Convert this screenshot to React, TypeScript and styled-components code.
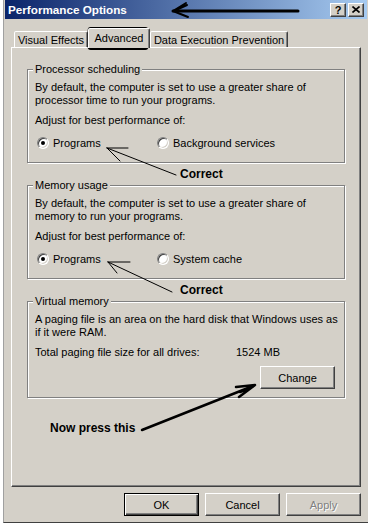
import React from 'react';
import styled, { createGlobalStyle, css } from 'styled-components';

const GlobalStyle = createGlobalStyle`
  html, body {
    margin: 0;
    background: #fff;
  }
  body {
    font-family: "Liberation Sans", Arial, sans-serif;
    font-size: 11px;
    color: #000;
  }
`;

const face = '#d4d0c8';

const Screen = styled.div`
  position: relative;
  width: 368px;
  height: 527px;
  overflow: hidden;
  background: #fff;
`;

const Window = styled.div`
  margin-left: 3px;
  width: 365px;
  height: 523px;
  box-sizing: border-box;
  padding: 0 1px;
  background: ${face};
  border-left: 1px solid #a0a0a0;
  border-bottom: 1px solid #404040;
  display: flex;
  flex-direction: column;
`;

const TitleBar = styled.div`
  height: 19px;
  display: flex;
  align-items: center;
  padding: 0 3px;
  background: linear-gradient(to right, #0a246a, #a6caf0);
`;

const Title = styled.span`
  flex: 1;
  color: #fff;
  font-weight: bold;
  font-size: 11.7px;
`;

const CaptionButton = styled.button`
  width: 16px;
  height: 14px;
  margin: 0 0 0 2px;
  padding: 0;
  box-sizing: border-box;
  display: flex;
  align-items: center;
  justify-content: center;
  background: ${face};
  border: 1px solid;
  border-color: #fff #404040 #404040 #fff;
  box-shadow: inset -1px -1px #808080;
  font: bold 11px "Liberation Sans", Arial, sans-serif;
  color: #000;
`;

const Body = styled.div`
  padding: 0 6px;
  display: flex;
  flex-direction: column;
`;

const TabStrip = styled.div`
  margin-top: 9px;
  margin-bottom: -1px;
  height: 20px;
  padding-left: 3px;
  display: flex;
  align-items: flex-end;
`;

const Tab = styled.div<{ $width: number; $active?: boolean }>`
  width: ${(p) => p.$width}px;
  height: 16px;
  margin-bottom: 1px;
  box-sizing: border-box;
  display: flex;
  align-items: center;
  justify-content: center;
  background: ${face};
  border: 1px solid;
  border-bottom: 0;
  border-color: #fff #404040 transparent #fff;
  border-radius: 2px 2px 0 0;
  box-shadow: inset -1px 0 #808080;
  white-space: nowrap;
  ${(p) =>
    p.$active &&
    css`
      position: relative;
      z-index: 1;
      height: 20px;
      margin-bottom: 0;
      padding-bottom: 2px;
    `}
`;

const Panel = styled.div`
  position: relative;
  height: 440px;
  box-sizing: border-box;
  padding: 21px 15px 0;
  border: 1px solid;
  border-color: #fff #404040 #404040 #fff;
  box-shadow: inset -1px -1px #808080;
`;

const Group = styled.div<{ $bottom: number }>`
  border: 1px solid #808080;
  box-shadow: inset 1px 1px #fff, 1px 1px #fff;
  padding: 0 7px ${(p) => p.$bottom}px;
`;

const Legend = styled.div`
  display: table;
  margin: -7px 0 0 -2px;
  padding: 0 2px;
  height: 13px;
  line-height: 13px;
  background: ${face};
`;

const Desc = styled.div`
  margin-top: 5px;
  line-height: 13px;
  white-space: nowrap;
`;

const Line = styled.div<{ $top: number }>`
  margin-top: ${(p) => p.$top}px;
  height: 13px;
  line-height: 13px;
  display: flex;
  white-space: nowrap;
`;

const Cell = styled.span<{ $width?: number }>`
  width: ${(p) => (p.$width ? `${p.$width}px` : 'auto')};
`;

const RadioRow = styled.div`
  margin-top: 9px;
  padding-left: 2px;
  height: 13px;
  display: flex;
  align-items: center;
`;

const RadioOption = styled.label<{ $width?: number }>`
  width: ${(p) => (p.$width ? `${p.$width}px` : 'auto')};
  display: flex;
  align-items: center;
  gap: 4px;
  white-space: nowrap;
`;

const RadioMark = styled.span<{ $checked?: boolean }>`
  width: 12px;
  height: 12px;
  box-sizing: border-box;
  border-radius: 50%;
  border: 1px solid;
  border-color: #808080 #fff #fff #808080;
  box-shadow: inset 1px 1px #404040, inset -1px -1px ${face};
  background: #fff;
  display: flex;
  align-items: center;
  justify-content: center;

  &::after {
    content: '';
    width: 4px;
    height: 4px;
    border-radius: 50%;
    background: ${(p) => (p.$checked ? '#000' : 'transparent')};
  }
`;

const Note = styled.div<{ $indent: number; $height?: number; $top?: number }>`
  margin-top: ${(p) => p.$top ?? 0}px;
  height: ${(p) => p.$height ?? 13}px;
  line-height: ${(p) => p.$height ?? 13}px;
  padding-left: ${(p) => p.$indent}px;
  font-weight: bold;
  font-size: 12px;
  white-space: nowrap;
`;

const ButtonLine = styled.div<{ $top: number; $gap?: number; $right?: number }>`
  margin-top: ${(p) => p.$top}px;
  padding-right: ${(p) => p.$right ?? 0}px;
  display: flex;
  justify-content: flex-end;
  gap: ${(p) => p.$gap ?? 0}px;
`;

const PushButton = styled.button<{ $default?: boolean }>`
  width: 75px;
  height: 23px;
  margin: 0;
  padding: 0;
  box-sizing: border-box;
  font: 11px "Liberation Sans", Arial, sans-serif;
  color: #000;
  background: ${face};
  border: 1px solid;
  border-color: #fff #404040 #404040 #fff;
  box-shadow: inset -1px -1px #808080;
  ${(p) =>
    p.$default &&
    css`
      border-color: #000;
      box-shadow: inset 1px 1px #fff, inset -1px -1px #404040, inset -2px -2px #808080;
    `}

  &:disabled {
    color: #808080;
    text-shadow: 1px 1px #fff;
  }
`;

const Annotations = styled.svg`
  position: absolute;
  top: 0;
  left: 0;
  width: 368px;
  height: 527px;
  pointer-events: none;
`;

const CloseGlyph = () => (
  <svg width="8" height="7" viewBox="0 0 8 7">
    <path d="M0.5 0.5 L7.5 6.5 M7.5 0.5 L0.5 6.5" stroke="#000" strokeWidth="1.6" fill="none" />
  </svg>
);

export default function App() {
  return (
    <Screen>
      <GlobalStyle />
      <Window>
        <TitleBar>
          <Title>Performance Options</Title>
          <CaptionButton>?</CaptionButton>
          <CaptionButton>
            <CloseGlyph />
          </CaptionButton>
        </TitleBar>
        <Body>
          <TabStrip>
            <Tab $width={74}>Visual Effects</Tab>
            <Tab $width={62} $active>
              Advanced
            </Tab>
            <Tab $width={138}>Data Execution Prevention</Tab>
          </TabStrip>
          <Panel>
            <Group $bottom={13}>
              <Legend>Processor scheduling</Legend>
              <Desc>
                By default, the computer is set to use a greater share of
                <br />
                processor time to run your programs.
              </Desc>
              <Line $top={7}>Adjust for best performance of:</Line>
              <RadioRow>
                <RadioOption $width={120}>
                  <RadioMark $checked />
                  Programs
                </RadioOption>
                <RadioOption>
                  <RadioMark />
                  Background services
                </RadioOption>
              </RadioRow>
            </Group>
            <Note $indent={153} $height={22}>
              Correct
            </Note>
            <Group $bottom={13}>
              <Legend>Memory usage</Legend>
              <Desc>
                By default, the computer is set to use a greater share of
                <br />
                memory to run your programs.
              </Desc>
              <Line $top={7}>Adjust for best performance of:</Line>
              <RadioRow>
                <RadioOption $width={120}>
                  <RadioMark $checked />
                  Programs
                </RadioOption>
                <RadioOption>
                  <RadioMark />
                  System cache
                </RadioOption>
              </RadioRow>
            </Group>
            <Note $indent={153} $height={22}>
              Correct
            </Note>
            <Group $bottom={8}>
              <Legend>Virtual memory</Legend>
              <Desc>
                A paging file is an area on the hard disk that Windows uses as
                <br />
                if it were RAM.
              </Desc>
              <Line $top={7}>
                <Cell $width={201}>Total paging file size for all drives:</Cell>
                <Cell>1524 MB</Cell>
              </Line>
              <ButtonLine $top={7} $right={2}>
                <PushButton>Change</PushButton>
              </ButtonLine>
            </Group>
            <Note $indent={23} $top={24}>
              Now press this
            </Note>
          </Panel>
          <ButtonLine $top={6} $gap={6}>
            <PushButton $default>OK</PushButton>
            <PushButton>Cancel</PushButton>
            <PushButton disabled>Apply</PushButton>
          </ButtonLine>
        </Body>
      </Window>

      <Annotations viewBox="0 0 368 527">
        <g stroke="#000" fill="none" strokeLinecap="round">
          <path d="M173 11 L298 11" strokeWidth="3" />
          <path d="M173 11 L186 3 M173 11 L188 17 M176 10 L187 5" strokeWidth="2" />
          <rect x="89.2" y="28.5" width="57.6" height="20" rx="1.5" strokeWidth="3" />
          <path d="M107 148 L176 175 M107 148 L128 148 M107 148 L120 161" strokeWidth="1" />
          <path d="M108 262 L172 292 M108 262 L130 262 M108 262 L117 273" strokeWidth="1" />
          <path d="M142 430 L253 386" strokeWidth="2.5" />
          <path d="M255 385 L236 387 M255 385 L239 397 M252 387 L240 392" strokeWidth="2.5" />
        </g>
      </Annotations>
    </Screen>
  );
}
